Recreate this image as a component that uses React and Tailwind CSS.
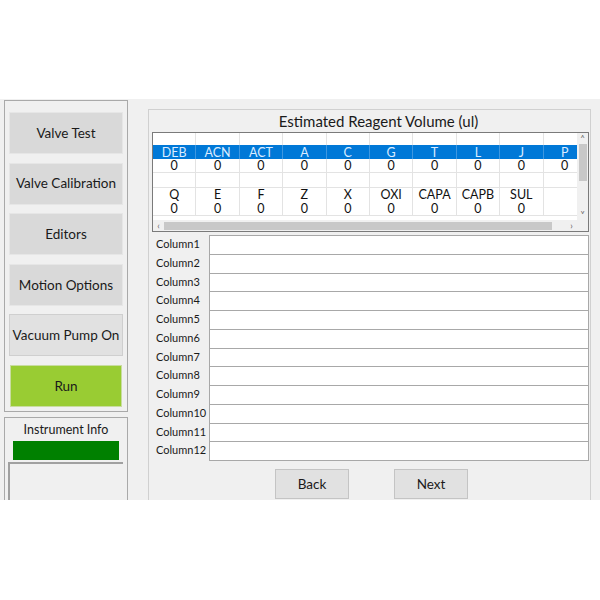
import React from 'react';

const font = { fontFamily: 'Lato, "Noto Sans", sans-serif' };

const topHeads = ['DEB', 'ACN', 'ACT', 'A', 'C', 'G', 'T', 'L', 'J', 'P'];
const bottomHeads = ['Q', 'E', 'F', 'Z', 'X', 'OXI', 'CAPA', 'CAPB', 'SUL', ''];

const SideButton = ({ label, tone = 'gray' }) => (
  <button
    type="button"
    className={`h-[42px] w-full text-[13.5px] text-[#1a1a1a] border ${
      tone === 'green'
        ? 'bg-[#99cc33] border-[#c9dca0]'
        : tone === 'light'
        ? 'bg-[#e1e1e1] border-[#cfcfcf]'
        : 'bg-[#d9d9d9] border-[#e6e6e6]'
    }`}
  >
    {label}
  </button>
);

const GridRow = ({ cells, blue, blank, line = true, short }) => (
  <div
    className={`flex ${short ? 'h-[12px]' : 'h-[14.2px]'} ${blue ? 'bg-[#0078d7] text-[#dcecff]' : 'bg-white text-[#111]'} ${
      line ? 'border-b border-[#e3e3e3]' : ''
    }`}
  >
    {cells.map((c, i) => (
      <div
        key={i}
        className={`w-[43.4px] shrink-0 border-r ${blue ? 'border-[#3f97e0]' : 'border-[#e3e3e3]'} flex items-center justify-center text-[12.5px] leading-[13px]`}
      >
        {blank ? '' : c}
      </div>
    ))}
  </div>
);

export default function App() {
  const zeros = Array(10).fill('0');
  const zeros9 = [...Array(9).fill('0'), ''];
  const empty = Array(10).fill('');

  return (
    <div className="w-[600px] h-[600px] bg-white" style={font}>
      <div className="h-[99px]" />
      <div className="h-[401px] bg-[#f0f0f0] flex overflow-hidden">
        {/* left side */}
        <div className="ml-[4px] w-[124px] flex flex-col">
          <div className="mt-[1px] h-[312px] border border-[#a9a9a9] px-[4px] pt-[11px] flex flex-col gap-[8.6px]">
            <SideButton label="Valve Test" />
            <SideButton label="Valve Calibration" />
            <SideButton label="Editors" />
            <SideButton label="Motion Options" />
            <SideButton label="Vacuum Pump On" tone="light" />
            <div className="px-[1px]">
              <SideButton label="Run" tone="green" />
            </div>
          </div>
          <div className="mt-[5px] flex-1 border-x border-t border-[#a9a9a9] flex flex-col items-center">
            <div className="pt-[3px] h-[23px] text-[12.5px] text-[#1a1a1a]">Instrument Info</div>
            <div className="w-[106px] h-[19px] bg-[#008000]" />
            <div className="mt-[2px] ml-[3px] self-stretch mr-[4px] flex-1 border-t-2 border-l-2 border-[#a0a0a0]" />
          </div>
        </div>

        {/* right panel */}
        <div className="ml-[20px] mt-[10px] w-[443px] h-[420px] border border-[#d0d0d0] flex flex-col">
          <div className="h-[22px] pl-[18px] flex items-center justify-center text-[15px] text-[#1a1a1a]">
            Estimated Reagent Volume (ul)
          </div>

          {/* grid */}
          <div className="ml-[3px] w-[437px] h-[100px] border border-[#7a7a7a] bg-white flex flex-col">
            <div className="flex h-[87px]">
              <div className="w-[424px] overflow-hidden flex flex-col">
                <div className="w-[434px]">
                  <GridRow cells={empty} blank line={false} short />
                  <GridRow cells={topHeads} blue line={false} />
                  <GridRow cells={zeros} />
                  <GridRow cells={empty} blank />
                  <GridRow cells={bottomHeads} line={false} />
                  <GridRow cells={zeros9} />
                </div>
              </div>
              <div className="w-[11px] bg-[#f0f0f0] flex flex-col items-center">
                <div className="h-[11px] text-[9px] leading-[11px] text-[#606060]">˄</div>
                <div className="w-[8px] h-[37px] bg-[#c8c8c8]" />
                <div className="flex-1" />
                <div className="h-[11px] text-[9px] leading-[11px] text-[#606060]">˅</div>
              </div>
            </div>
            <div className="flex h-[11px]">
              <div className="w-[424px] bg-[#f0f0f0] flex items-center">
                <div className="w-[11px] text-center text-[9px] leading-none text-[#606060]">‹</div>
                <div className="w-[388px] h-[8px] bg-[#c8c8c8]" />
                <div className="flex-1" />
                <div className="w-[11px] text-center text-[9px] leading-none text-[#606060]">›</div>
              </div>
              <div className="w-[11px] bg-[#f0f0f0]" />
            </div>
          </div>

          {/* column rows */}
          <div className="mt-[3px] flex flex-col">
            {Array.from({ length: 12 }, (_, i) => (
              <div key={i} className="flex h-[18.75px] items-stretch">
                <div className="w-[60px] pl-[7px] text-[11px] text-[#1a1a1a] flex items-center whitespace-nowrap">
                  Column{i + 1}
                </div>
                <div className="w-[380px] bg-white border border-[#a8a8a8] -mb-px" />
              </div>
            ))}
          </div>

          <div className="mt-[9px] flex">
            <button type="button" className="ml-[126px] w-[74px] h-[30px] bg-[#e1e1e1] border border-[#c4c4c4] text-[13.5px] text-[#1a1a1a]">
              Back
            </button>
            <button type="button" className="ml-[45px] w-[74px] h-[30px] bg-[#e1e1e1] border border-[#c4c4c4] text-[13.5px] text-[#1a1a1a]">
              Next
            </button>
          </div>
        </div>
      </div>
    </div>
  );
}
